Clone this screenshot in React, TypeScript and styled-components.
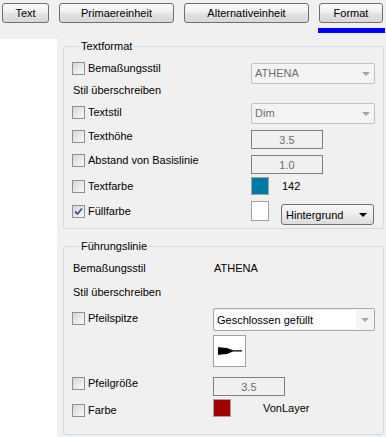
import React from 'react';
import styled, { createGlobalStyle } from 'styled-components';

const GlobalStyle = createGlobalStyle`
  html, body {
    margin: 0;
    padding: 0;
    background: #f0f0f0;
  }
  body {
    font-family: "Liberation Sans", Arial, sans-serif;
    font-size: 11px;
    color: #000;
  }
`;

const Page = styled.div`
  width: 386px;
  height: 437px;
  display: flex;
  flex-direction: column;
  overflow: hidden;
`;

const TabBar = styled.div`
  display: flex;
  gap: 10px;
  height: 39px;
  padding: 3px 0 0 2px;
  box-sizing: border-box;
`;

const TabItem = styled.div`
  display: flex;
  flex-direction: column;
`;

const TabButton = styled.button<{ $w: number }>`
  width: ${p => p.$w}px;
  height: 20px;
  margin: 0;
  padding: 0;
  border: 1px solid #707070;
  border-radius: 3px;
  background: linear-gradient(to bottom, #fbfbfb 0%, #f0f0f0 45%, #e2e2e2 55%, #d8d8d8 100%);
  font-family: inherit;
  font-size: 11px;
  color: #000;
`;

const ActiveBar = styled.div`
  height: 5px;
  margin: 5px -2px 0 -1px;
  background: #0000ff;
`;

const Main = styled.div`
  flex: 1;
  display: flex;
`;

const Sidebar = styled.div`
  width: 57px;
  background: #fff;
`;

const Content = styled.div`
  width: 321px;
  padding-left: 6px;
  display: flex;
  flex-direction: column;
`;

const GroupBox = styled.fieldset<{ $top: number; $bottom: number }>`
  margin: ${p => p.$top}px 0 0 0;
  padding: 9px 0 ${p => p.$bottom}px 8px;
  border: 1px solid #d3dbe2;
  border-radius: 3px;
  min-width: 0;
  display: flex;
  flex-direction: column;
`;

const Legend = styled.legend`
  margin-left: 7px;
  padding: 0 2px;
  line-height: 13px;
  font-size: 11px;
`;

const Row = styled.div<{ $h: number }>`
  height: ${p => p.$h}px;
  display: flex;
  align-items: flex-start;
`;

const LabelCell = styled.div<{ $w: number; $dy?: number }>`
  width: ${p => p.$w}px;
  flex-shrink: 0;
  margin-top: ${p => p.$dy || 0}px;
  display: flex;
  align-items: center;
  gap: 3px;
  height: 13px;
  line-height: 13px;
`;

const PlainText = styled.span`
  padding-left: 1px;
  line-height: 13px;
`;

const ControlCell = styled.div<{ $dy?: number }>`
  margin-top: ${p => p.$dy || 0}px;
  display: flex;
  align-items: flex-start;
`;

const CheckBox = styled.span`
  width: 13px;
  height: 13px;
  box-sizing: border-box;
  border: 1px solid #8e8f8f;
  background: linear-gradient(135deg, #d4d4d4 0%, #ececec 60%, #fafafa 100%);
  display: flex;
  align-items: center;
  justify-content: center;
`;

const Combo = styled.div<{ $w: number; $h: number; $disabled?: boolean }>`
  width: ${p => p.$w}px;
  height: ${p => p.$h}px;
  box-sizing: border-box;
  border: 1px solid ${p => (p.$disabled ? '#c2c2c2' : '#a9a9a9')};
  border-radius: 2px;
  background: #f4f4f4;
  display: flex;
  align-items: center;
  padding: ${p => (p.$disabled ? '0 0 0 3px' : '1px')};
  color: ${p => (p.$disabled ? '#6d6d6d' : '#000')};
`;

const ComboText = styled.span`
  flex: 1;
  line-height: 13px;
`;

const ComboField = styled.span`
  flex: 1;
  align-self: stretch;
  background: #fff;
  display: flex;
  align-items: center;
  padding-left: 2px;
`;

const ComboArrow = styled.span`
  width: 17px;
  display: flex;
  justify-content: center;
  &::after {
    content: '';
    border-left: 4px solid transparent;
    border-right: 4px solid transparent;
    border-top: 4px solid #a6a6a6;
  }
`;

const TextBox = styled.div`
  width: 72px;
  height: 19px;
  box-sizing: border-box;
  border: 1px solid #7f7f7f;
  color: #6d6d6d;
  display: flex;
  align-items: center;
  justify-content: center;
`;

const Swatch = styled.div<{ $color: string; $h?: number }>`
  width: 18px;
  height: ${p => p.$h || 18}px;
  box-sizing: border-box;
  border: 1px solid #a0a0a0;
  background: ${p => p.$color};
`;

const SwatchLabel = styled.span<{ $gap: number }>`
  margin-left: ${p => p.$gap}px;
  line-height: 18px;
`;

const DropButton = styled.div`
  width: 93px;
  height: 21px;
  margin: 3px 0 0 12px;
  box-sizing: border-box;
  border: 1px solid #707070;
  border-radius: 3px;
  background: linear-gradient(to bottom, #f8f8f8 0%, #ececec 50%, #dcdcdc 100%);
  display: flex;
  align-items: center;
  padding: 0 6px 0 4px;
  justify-content: space-between;
  &::after {
    content: '';
    border-left: 4px solid transparent;
    border-right: 4px solid transparent;
    border-top: 4px solid #000;
  }
`;

const Preview = styled.div`
  width: 33px;
  height: 32px;
  box-sizing: border-box;
  border: 1px solid #a0a0a0;
  background: #fff;
  display: flex;
  align-items: center;
  justify-content: center;
`;

const Check: React.FC<{ checked?: boolean }> = ({ checked }) => (
  <CheckBox>
    {checked && (
      <svg width="9" height="9" viewBox="0 0 9 9">
        <path d="M1 4.5 L3.5 7 L8 1.5" fill="none" stroke="#3d4fa3" strokeWidth="1.8" />
      </svg>
    )}
  </CheckBox>
);

// closed filled arrowhead, blocky like the bitmap preview
const ArrowHead = () => (
  <svg width="24" height="8" viewBox="0 0 24 8">
    <polygon
      points="0,0.5 1,0 3,0.5 9,1 15,3.2 24,3.2 24,4.6 15,4.6 9,7 3,7.5 1,8 0,7.5"
      fill="#000"
    />
  </svg>
);

const tabs = [
  { label: 'Text', w: 47 },
  { label: 'Primaereinheit', w: 115 },
  { label: 'Alternativeinheit', w: 125 },
  { label: 'Format', w: 64, active: true }
];

const TF = 179;
const FL = 141;

export default function App() {
  return (
    <Page>
      <GlobalStyle />
      <TabBar>
        {tabs.map(t => (
          <TabItem key={t.label}>
            <TabButton $w={t.w}>{t.label}</TabButton>
            {t.active && <ActiveBar />}
          </TabItem>
        ))}
      </TabBar>
      <Main>
        <Sidebar />
        <Content>
          <GroupBox $top={1} $bottom={3}>
            <Legend>Textformat</Legend>
            <Row $h={22}>
              <LabelCell $w={TF}>
                <Check />
                Bemaßungsstil
              </LabelCell>
              <ControlCell $dy={1}>
                <Combo $w={124} $h={21} $disabled>
                  <ComboText>ATHENA</ComboText>
                  <ComboArrow />
                </Combo>
              </ControlCell>
            </Row>
            <Row $h={19}>
              <PlainText>Stil überschreiben</PlainText>
            </Row>
            <Row $h={27}>
              <LabelCell $w={TF} $dy={3}>
                <Check />
                Textstil
              </LabelCell>
              <ControlCell>
                <Combo $w={124} $h={21} $disabled>
                  <ComboText>Dim</ComboText>
                  <ComboArrow />
                </Combo>
              </ControlCell>
            </Row>
            <Row $h={24}>
              <LabelCell $w={TF}>
                <Check />
                Texthöhe
              </LabelCell>
              <ControlCell>
                <TextBox>3.5</TextBox>
              </ControlCell>
            </Row>
            <Row $h={23}>
              <LabelCell $w={TF}>
                <Check />
                Abstand von Basislinie
              </LabelCell>
              <ControlCell $dy={1}>
                <TextBox>1.0</TextBox>
              </ControlCell>
            </Row>
            <Row $h={24}>
              <LabelCell $w={TF} $dy={3}>
                <Check />
                Textfarbe
              </LabelCell>
              <ControlCell>
                <Swatch $color="#0079a3" />
                <SwatchLabel $gap={13}>142</SwatchLabel>
              </ControlCell>
            </Row>
            <Row $h={24}>
              <LabelCell $w={TF} $dy={4}>
                <Check checked />
                Füllfarbe
              </LabelCell>
              <ControlCell>
                <Swatch $color="#fff" $h={20} />
                <DropButton>Hintergrund</DropButton>
              </ControlCell>
            </Row>
          </GroupBox>

          <GroupBox $top={11} $bottom={17}>
            <Legend>Führungslinie</Legend>
            <Row $h={24}>
              <LabelCell $w={FL}>
                <PlainText>Bemaßungsstil</PlainText>
              </LabelCell>
              <ControlCell>
                <PlainText>ATHENA</PlainText>
              </ControlCell>
            </Row>
            <Row $h={22}>
              <PlainText>Stil überschreiben</PlainText>
            </Row>
            <Row $h={27}>
              <LabelCell $w={FL} $dy={4}>
                <Check />
                Pfeilspitze
              </LabelCell>
              <ControlCell>
                <Combo $w={162} $h={23}>
                  <ComboField>Geschlossen gefüllt</ComboField>
                  <ComboArrow />
                </Combo>
              </ControlCell>
            </Row>
            <Row $h={42}>
              <LabelCell $w={FL} />
              <ControlCell>
                <Preview>
                  <ArrowHead />
                </Preview>
              </ControlCell>
            </Row>
            <Row $h={22}>
              <LabelCell $w={FL}>
                <Check />
                Pfeilgröße
              </LabelCell>
              <ControlCell>
                <TextBox>3.5</TextBox>
              </ControlCell>
            </Row>
            <Row $h={18}>
              <LabelCell $w={FL} $dy={5}>
                <Check />
                Farbe
              </LabelCell>
              <ControlCell>
                <Swatch $color="#a40000" />
                <SwatchLabel $gap={32}>VonLayer</SwatchLabel>
              </ControlCell>
            </Row>
          </GroupBox>
        </Content>
      </Main>
    </Page>
  );
}
